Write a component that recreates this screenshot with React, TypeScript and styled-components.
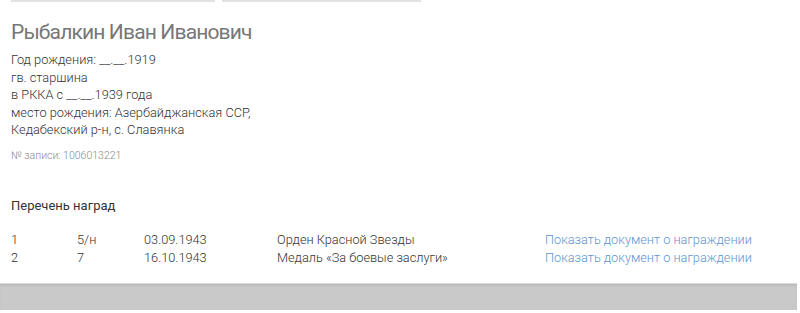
import React from 'react';
import styled, { createGlobalStyle } from 'styled-components';

const GlobalStyle = createGlobalStyle`
  html, body {
    margin: 0;
    padding: 0;
    background: #fff;
  }
  body {
    font-family: Roboto, "Liberation Sans", sans-serif;
    width: 800px;
    height: 313px;
    overflow: hidden;
  }
`;

const Page = styled.div`
  width: 800px;
  height: 313px;
  display: flex;
  flex-direction: column;
`;

const Card = styled.div`
  padding: 0 11px;
  height: 283px;
  box-sizing: border-box;
`;

const TopFields = styled.div`
  display: flex;
  gap: 7px;
  height: 3px;
`;

const FieldLine = styled.div<{ $w: number }>`
  width: ${p => p.$w}px;
  height: 2px;
  background: #e2e2e2;
`;

const Name = styled.h1`
  margin: 15px 0 0;
  font-size: 21px;
  font-weight: 400;
  letter-spacing: -0.85px;
  line-height: 28px;
  color: #777;
`;

const Info = styled.div`
  margin-top: 5px;
  font-size: 12.8px;
  font-weight: 300;
  line-height: 17.6px;
  color: #333;
`;

const RecordNo = styled.div`
  margin-top: 10px;
  font-size: 10.5px;
  font-weight: 300;
  line-height: 14px;
  color: #8a8a8a;
`;

const SectionTitle = styled.div`
  margin-top: 34px;
  font-size: 13px;
  line-height: 18px;
  color: #333;
`;

const Awards = styled.div`
  margin-top: 16px;
  display: flex;
  flex-direction: column;
`;

const AwardRow = styled.div`
  display: grid;
  grid-template-columns: 66px 67px 133px 268px 1fr;
  font-size: 12.75px;
  font-weight: 300;
  line-height: 18px;
  color: #333;
`;

const DocLink = styled.a`
  color: #5f93d0;
  text-decoration: none;
  cursor: pointer;
`;

const Footer = styled.div`
  width: 797px;
  height: 27px;
  background: #c9c9c9;
  box-shadow: inset 0 2px 2px rgba(0, 0, 0, 0.06);
  border-top: 1px solid #d8d8d8;
  box-sizing: border-box;
`;

const awards = [
  { n: '1', num: '5/н', date: '03.09.1943', title: 'Орден Красной Звезды' },
  { n: '2', num: '7', date: '16.10.1943', title: 'Медаль «За боевые заслуги»' },
];

export default function App() {
  return (
    <Page>
      <GlobalStyle />
      <Card>
        <TopFields>
          <FieldLine $w={204} />
          <FieldLine $w={199} />
        </TopFields>
        <Name>Рыбалкин Иван Иванович</Name>
        <Info>
          <div>Год рождения: __.__.1919</div>
          <div>гв. старшина</div>
          <div>в РККА с __.__.1939 года</div>
          <div>место рождения: Азербайджанская ССР,</div>
          <div>Кедабекский р-н, с. Славянка</div>
        </Info>
        <RecordNo>№ записи: 1006013221</RecordNo>
        <SectionTitle>Перечень наград</SectionTitle>
        <Awards>
          {awards.map(a => (
            <AwardRow key={a.n}>
              <span>{a.n}</span>
              <span>{a.num}</span>
              <span>{a.date}</span>
              <span>{a.title}</span>
              <DocLink>Показать документ о награждении</DocLink>
            </AwardRow>
          ))}
        </Awards>
      </Card>
      <Footer />
    </Page>
  );
}
